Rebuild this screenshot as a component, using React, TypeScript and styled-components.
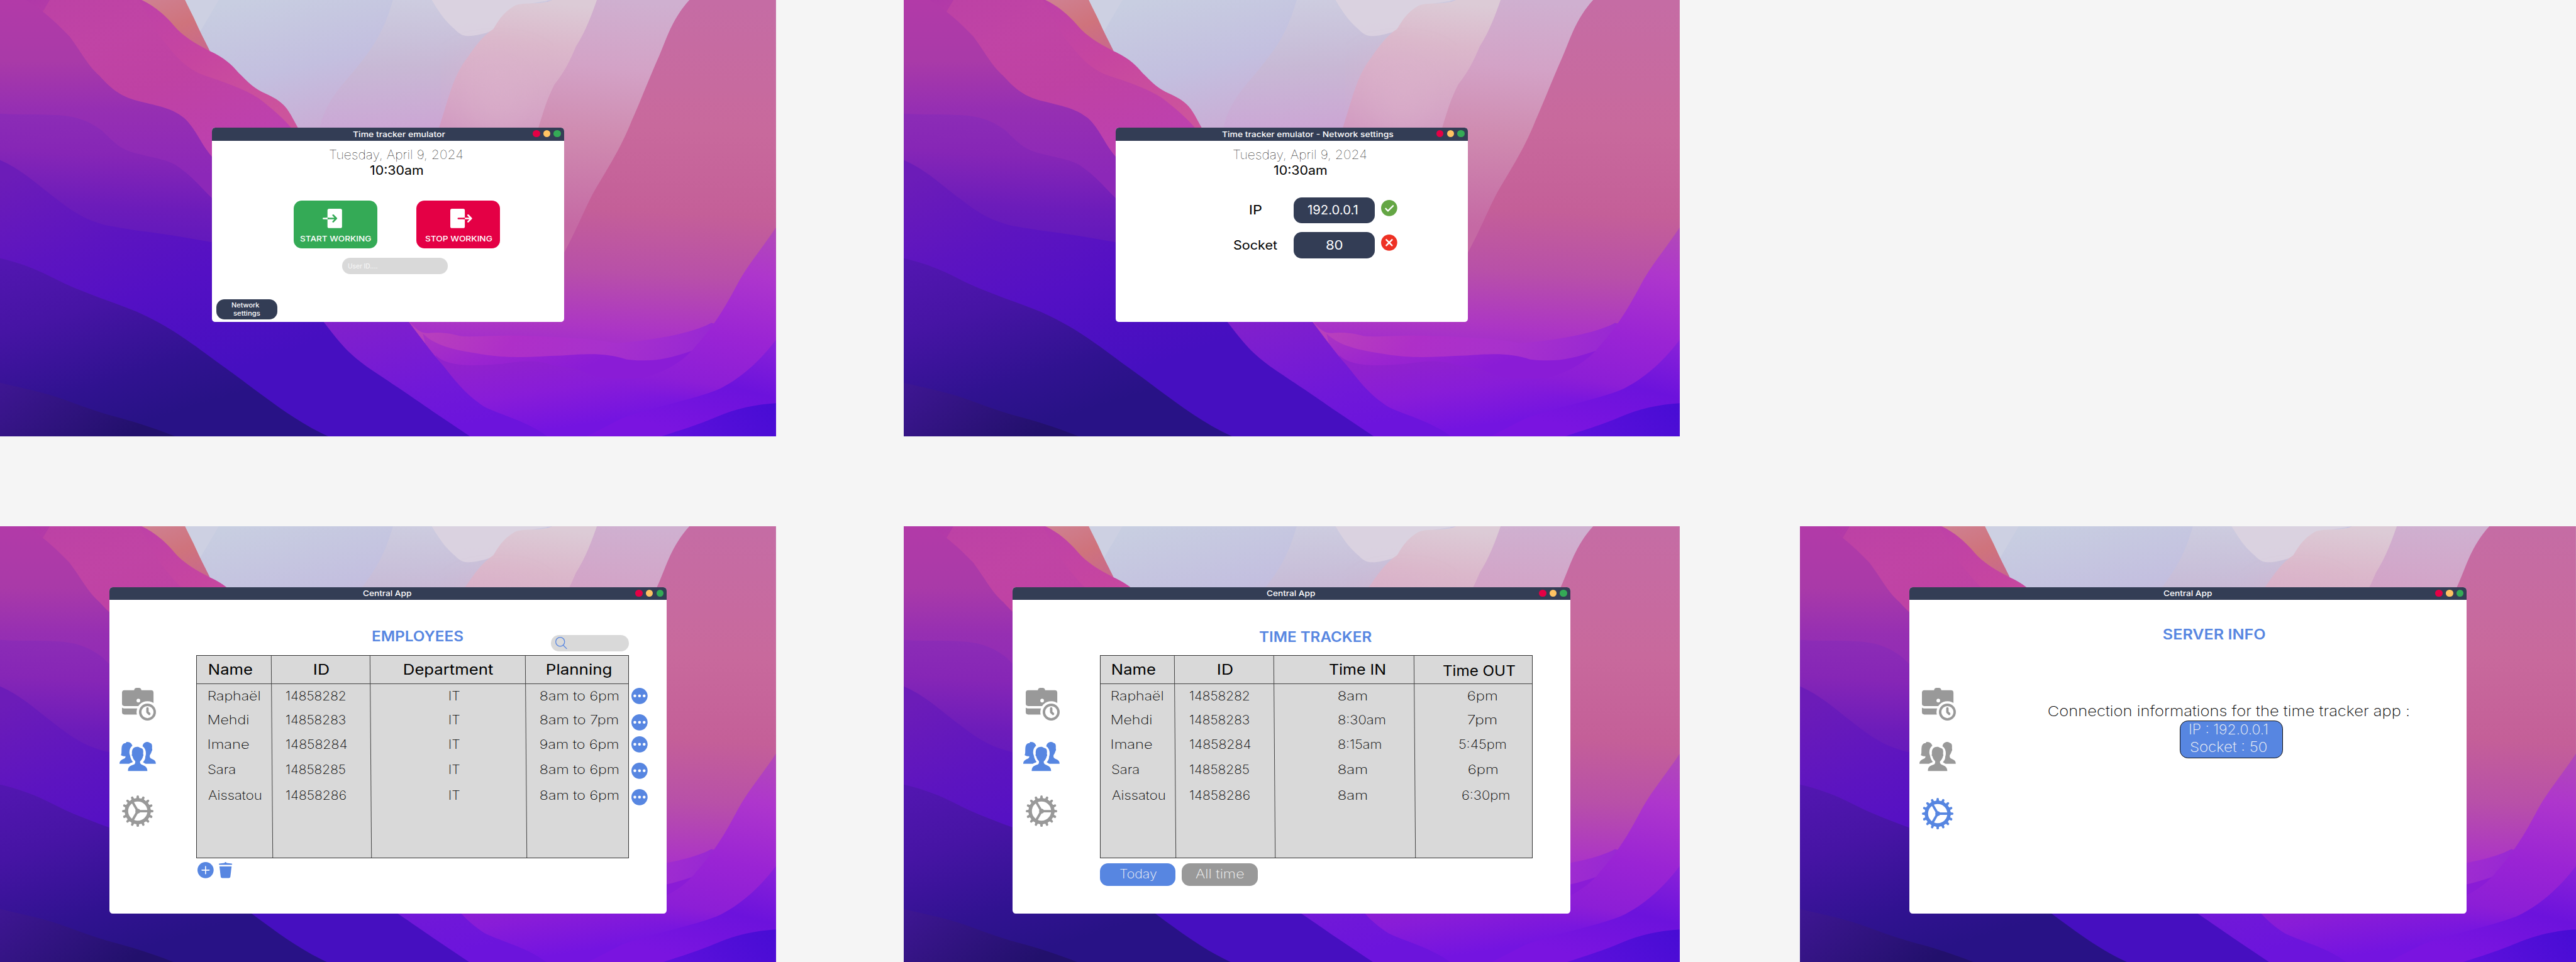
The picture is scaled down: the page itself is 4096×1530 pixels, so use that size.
import React, { useLayoutEffect, useRef, useState } from "react";
import styled, { createGlobalStyle, css } from "styled-components";

const SCALE = 4096 / 6374;
const u = (n: number) => `${+(n * SCALE).toFixed(3)}px`;

const FONT = `Inter, Lato, sans-serif`;
const CAP_FIX = 0.963;
const LINE = 1.219;

const color = {
  page: "#f5f5f5",
  navy: "#333d55",
  blue: "#5786e1",
  gray: "#999999",
  field: "#d9d9d9",
  green: "#34aa56",
  red: "#e40045",
  amber: "#ffc363",
  soft: "#f5f5f5",
};

const GlobalStyle = createGlobalStyle`
  body { margin: 0; background: ${color.page}; font-family: ${FONT}; }
  * { box-sizing: border-box; }
`;

/* ---------- text ---------- */

type InkProps = {
  children: string;
  w: number;
  size?: number;
  weight?: number;
  tone?: string;
  ml?: number;
  mt?: number;
};

const InkBox = styled.span<{ $w: number; $size: number; $weight: number; $tone: string; $ml: number; $mt: number }>`
  display: block;
  flex: none;
  width: ${(p) => u(p.$w)};
  height: ${(p) => u(p.$size * LINE)};
  line-height: ${(p) => u(p.$size * LINE)};
  margin: ${(p) => u(p.$mt)} 0 0 ${(p) => u(p.$ml)};
  font-size: ${(p) => u(p.$size * CAP_FIX)};
  font-weight: ${(p) => p.$weight};
  color: ${(p) => p.$tone};
  white-space: pre;
`;

const InkGlyphs = styled.span`
  display: inline-block;
  transform-origin: 0 0;
`;

/* Stretches a line of text so that its ink spans exactly the given width. */
function Ink({ children, w, size = 32, weight = 400, tone = "#000", ml = 0, mt = 0 }: InkProps) {
  const ref = useRef<HTMLSpanElement>(null);
  const [transform, setTransform] = useState("none");
  useLayoutEffect(() => {
    const ctx = document.createElement("canvas").getContext("2d");
    if (!ctx || !ref.current) return;
    const cs = getComputedStyle(ref.current);
    ctx.font = `${cs.fontWeight} ${cs.fontSize} ${cs.fontFamily}`;
    const m = ctx.measureText(children);
    const k = (w * SCALE) / (m.actualBoundingBoxLeft + m.actualBoundingBoxRight);
    const a = m.fontBoundingBoxAscent;
    const d = m.fontBoundingBoxDescent;
    const line = size * LINE * SCALE;
    const dy = 0.968 * size * SCALE - ((line - a - d) / 2 + a);
    setTransform(`translateY(${dy.toFixed(2)}px) scaleX(${k.toFixed(4)}) translateX(${m.actualBoundingBoxLeft.toFixed(2)}px)`);
  }, [children, w, size, weight]);
  return (
    <InkBox $w={w} $size={size} $weight={weight} $tone={tone} $ml={ml} $mt={mt}>
      <InkGlyphs ref={ref} style={{ transform }}>{children}</InkGlyphs>
    </InkBox>
  );
}

/* ---------- canvas and boards ---------- */

const Canvas = styled.main`
  width: 4096px;
  height: 1530px;
  overflow: hidden;
  display: flex;
  flex-direction: column;
  gap: ${u(222)};
  background: ${color.page};
`;

const BoardRow = styled.div`
  display: flex;
  flex: none;
  height: ${u(1080)};
`;

const BoardFrame = styled.section<{ $gap: number; $top: number }>`
  position: relative;
  flex: none;
  width: ${u(1920)};
  height: ${u(1080)};
  margin-left: ${(p) => u(p.$gap)};
  padding-top: ${(p) => u(p.$top)};
  display: flex;
  justify-content: center;
  align-items: flex-start;
  overflow: hidden;
`;

const WallpaperSvg = styled.svg`
  position: absolute;
  inset: 0;
  width: 100%;
  height: 100%;
`;

function Grad({ id, x1 = 0, y1 = 0, x2 = 0, y2 = 0, stops }: { id: string; x1?: number; y1?: number; x2?: number; y2?: number; stops: [number, string][] }) {
  return (
    <linearGradient id={id} gradientUnits="userSpaceOnUse" x1={x1} y1={y1} x2={x2} y2={y2}>
      {stops.map(([o, c]) => <stop key={o} offset={o} stopColor={c} />)}
    </linearGradient>
  );
}

function Wallpaper({ id }: { id: string }) {
  const f = (n: string) => `url(#${id}${n})`;
  return (
    <WallpaperSvg viewBox="0 0 1560 1554" preserveAspectRatio="none" aria-hidden>
      <defs>
        <Grad id={id + "sky"} x1={480} y1={0} x2={780} y2={700} stops={[[0, "#c8cee1"], [0.35, "#c3bfdf"], [0.7, "#cba9d3"], [1, "#c890c8"]]} />
        <Grad id={id + "sky2"} x1={780} y1={0} x2={760} y2={470} stops={[[0, "#d2d0df"], [0.5, "#c9b8d0"], [1, "#cca4d6"]]} />
        <Grad id={id + "p1"} x1={1050} y1={0} x2={950} y2={600} stops={[[0, "#dccbd6"], [0.25, "#dbb8cb"], [0.75, "#d29cc2"], [1, "#cf8cc0"]]} />
        <Grad id={id + "p2"} x1={1250} y1={0} x2={1120} y2={800} stops={[[0, "#cfb0d0"], [0.3, "#d3a2c6"], [0.6, "#cf8bb0"], [1, "#c569a4"]]} />
        <Grad id={id + "p3"} x1={1400} y1={0} x2={1280} y2={1300} stops={[[0, "#c56ca4"], [0.35, "#c8699c"], [0.58, "#c45f98"], [0.75, "#b850a8"], [0.9, "#ac36c4"], [1, "#9c28d0"]]} />
        <Grad id={id + "r1"} x1={1540} y1={820} x2={1340} y2={1420} stops={[[0, "#b148b8"], [0.25, "#ae36cc"], [0.6, "#9a24d4"], [0.88, "#8c1ed6"], [1, "#861ad800"]]} />
        <Grad id={id + "r2"} x1={1560} y1={1210} x2={1400} y2={1553} stops={[[0, "#8a22d8"], [0.5, "#6c12dc"], [1, "#7a14e0"]]} />
        <Grad id={id + "r3"} x1={1350} y1={1553} x2={1560} y2={1450} stops={[[0, "#5c10dc"], [1, "#480cd4"]]} />
        <Grad id={id + "b1"} x1={850} y1={1180} x2={1400} y2={1400} stops={[[0, "#b840bc"], [0.3, "#ae2fc8"], [0.6, "#a831cc"], [1, "#9426d4"]]} />
        <Grad id={id + "b2"} x1={860} y1={1200} x2={1000} y2={1420} stops={[[0, "#a932c4"], [0.5, "#9a24d0"], [1, "#8a1cd6"]]} />
        <Grad id={id + "b3"} x1={950} y1={1290} x2={1020} y2={1553} stops={[[0, "#9022cc"], [0.5, "#881cd8"], [1, "#7414e0"]]} />
        <Grad id={id + "or"} x1={300} y1={0} x2={420} y2={180} stops={[[0, "#cf8090"], [0.5, "#cf737c"], [1, "#c8688c"]]} />
        <Grad id={id + "ma"} x1={60} y1={0} x2={560} y2={420} stops={[[0, "#b038a8"], [0.3, "#bf42a6"], [0.6, "#c645a0"], [1, "#cc549c"]]} />
        <Grad id={id + "mb"} x1={300} y1={100} x2={520} y2={480} stops={[[0, "#c044a4"], [0.4, "#bc40a4"], [1, "#b83ab4"]]} />
        <Grad id={id + "mc"} x1={120} y1={0} x2={120} y2={620} stops={[[0, "#b23aa8"], [0.35, "#a93aa8"], [0.62, "#962fb2"], [1, "#8c28b8"]]} />
        <Grad id={id + "md"} x1={120} y1={405} x2={80} y2={860} stops={[[0, "#8c2cb6"], [0.3, "#8626b6"], [0.7, "#6c1cba"], [1, "#6018bc"]]} />
        <Grad id={id + "me"} x1={60} y1={600} x2={500} y2={1300} stops={[[0, "#6c1cb8"], [0.35, "#5c14c0"], [0.6, "#5410c4"], [1, "#460fc0"]]} />
        <Grad id={id + "mf"} x1={30} y1={920} x2={330} y2={1480} stops={[[0, "#5216b0"], [0.35, "#4614a4"], [0.75, "#301290"], [1, "#281286"]]} />
        <Grad id={id + "mg"} x1={0} y1={1370} x2={260} y2={1553} stops={[[0, "#3e1692"], [1, "#22106c"]]} />
        <Grad id={id + "pv"} x1={560} y1={900} x2={850} y2={1553} stops={[[0, "#8a24c8"], [0.4, "#8020cc"], [0.8, "#7018d8"], [1, "#6c14dc"]]} />
        <filter id={id + "soft"} x="-30%" y="-30%" width="160%" height="160%"><feGaussianBlur stdDeviation="40" /></filter>
      </defs>
      <rect width="1560" height="1554" fill={f("sky")} />
      <path d="M790 0C775 90 760 150 715 245C680 320 650 370 640 480L1000 700L1100 0Z" fill={f("sky2")} opacity="0.6" />
      <path d="M440 0C420 60 410 90 400 120L372 0Z" fill="#cdd0e2" />
      <path d="M868 0C885 50 895 75 915 105C930 135 945 135 990 110L1040 20L1110 0Z" fill="#dcd3e0" opacity="0.9" />
      <path d="M1110 0C1085 20 1055 5 1035 20C1010 45 1000 80 992 103C972 125 955 165 940 205C915 260 905 330 895 385L880 470L700 900V1200H1560V0Z" fill={f("p1")} />
      <ellipse cx="1000" cy="330" rx="70" ry="150" fill="#dcb4cc" opacity="0.5" filter={f("soft")} />
      <path d="M1200 0C1190 50 1178 110 1158 165C1145 220 1135 255 1115 300C1100 350 1092 400 1080 470L1000 1200H1560V0Z" fill={f("p2")} />
      <path d="M1386 0C1350 70 1340 140 1325 200C1305 280 1290 350 1270 430C1250 520 1225 590 1205 650C1180 720 1165 800 1134 900L1100 1080L815 1080L700 1400L1560 1554V0Z" fill={f("p3")} />
      <path d="M815 1130C840 1180 845 1186 862 1186C890 1182 905 1188 925 1197C950 1202 1000 1192 1060 1196C1130 1200 1190 1205 1240 1222C1330 1210 1400 1180 1430 1150L1560 1200V1554H900Z" fill={f("b1")} />
      <path d="M850 1188C880 1240 930 1250 970 1262C1030 1280 1080 1268 1130 1266C1190 1258 1220 1258 1260 1280C1310 1290 1340 1280 1390 1250L1560 1300V1554H900Z" fill={f("b2")} />
      <path d="M876 1265C900 1310 960 1302 1010 1296C1050 1285 1080 1280 1110 1300C1140 1312 1150 1305 1175 1325C1210 1355 1260 1350 1300 1345L1560 1300V1554H900Z" fill={f("b3")} />
      <path d="M1560 810C1530 890 1500 950 1480 1020C1450 1120 1430 1170 1400 1230C1370 1300 1320 1340 1260 1360L1200 1554H1560Z" fill={f("r1")} />
      <path d="M1560 1210C1530 1280 1490 1350 1440 1390C1380 1430 1310 1450 1250 1490L1180 1554H1560Z" fill={f("r2")} />
      <path d="M1560 1436C1520 1440 1480 1455 1440 1485C1400 1515 1370 1530 1330 1554H1560Z" fill={f("r3")} />
      <path d="M285 0H372C380 30 388 55 396 88C404 120 412 145 422 182L380 160L330 80Z" fill={f("or")} />
      <path d="M0 0H285C310 22 330 50 350 92C368 130 395 158 422 182C450 205 465 228 480 260C500 295 512 318 535 334C565 358 575 378 585 410L599 455L640 700L400 900L0 600Z" fill={f("ma")} />
      <path d="M280 0C300 60 310 110 340 170C360 215 380 248 410 268C450 292 490 315 520 350C545 385 570 420 590 465L640 800L300 800L0 300L100 0Z" fill={f("mb")} opacity="0.75" />
      <path d="M0 0H52C90 40 118 90 140 130C165 190 175 230 200 270C225 320 245 345 275 358C320 378 345 385 370 420C395 460 405 520 430 565L500 900H0Z" fill={f("mc")} />
      <path d="M0 405C50 410 70 406 110 410C160 412 185 440 205 465C225 500 240 528 265 542C300 560 330 565 352 586C385 625 400 660 430 712L820 1145L900 1400L500 1300L0 900Z" fill={f("md")} />
      <path d="M426 705C560 860 740 960 820 1142C845 1200 865 1250 890 1300C915 1355 935 1405 975 1450C1010 1480 1060 1500 1100 1554H900L500 1200Z" fill={f("pv")} />
      <path d="M0 570C40 600 70 650 100 690C140 745 165 780 215 803C270 822 320 830 370 845L430 864C540 900 600 1020 650 1145C685 1225 700 1260 745 1315C800 1380 830 1415 870 1465L945 1554H0Z" fill={f("me")} />
      <path d="M0 920C60 945 90 975 130 1010C180 1050 225 1075 275 1110C330 1155 355 1185 395 1235C440 1295 470 1330 510 1385C560 1450 605 1510 660 1554H0Z" fill={f("mf")} />
      <path d="M0 1363C60 1388 95 1400 135 1427C170 1450 200 1470 245 1490C285 1510 315 1528 352 1554H0Z" fill={f("mg")} />
    </WallpaperSvg>
  );
}

/* ---------- application window ---------- */

const WindowFrame = styled.article<{ $w: number; $h: number }>`
  position: relative;
  width: ${(p) => u(p.$w)};
  height: ${(p) => u(p.$h)};
  border-radius: ${u(8)};
  background: #fff;
  overflow: hidden;
  display: flex;
  flex-direction: column;
`;

const TitleBar = styled.header`
  flex: none;
  height: ${u(32)};
  background: ${color.navy};
  display: flex;
  align-items: flex-start;
`;

const Lights = styled.div`
  margin: ${u(6)} ${u(8)} 0 auto;
  display: flex;
  gap: ${u(8)};
`;

const Light = styled.i<{ $c: string }>`
  width: ${u(18)};
  height: ${u(18)};
  border-radius: 50%;
  background: ${(p) => p.$c};
`;

type Title = { text: string; w: number; ml: number; mt: number };

function AppWindow({ w, h, title, children }: { w: number; h: number; title: Title; children: React.ReactNode }) {
  return (
    <WindowFrame $w={w} $h={h}>
      <TitleBar>
        <Ink size={20} weight={550} tone="#fff" w={title.w} ml={title.ml} mt={title.mt}>{title.text}</Ink>
        <Lights>
          <Light $c={color.red} />
          <Light $c={color.amber} />
          <Light $c={color.green} />
        </Lights>
      </TitleBar>
      {children}
    </WindowFrame>
  );
}

/* ---------- emulator screens ---------- */

const Clock = styled.div`
  width: ${u(330.5)};
  margin: ${u(16)} 0 0 ${u(291)};
  display: flex;
  flex-direction: column;
  align-items: center;
`;

const ClockFace = () => (
  <Clock>
    <Ink w={330} weight={100}>Tuesday, April 9, 2024</Ink>
    <Ink w={131} weight={400}>10:30am</Ink>
  </Clock>
);

const Actions = styled.div`
  display: flex;
  gap: ${u(96)};
  margin: ${u(55)} 0 0 ${u(203)};
`;

const ActionButton = styled.div<{ $c: string }>`
  width: ${u(207)};
  height: ${u(117)};
  border-radius: ${u(20)};
  background: ${(p) => p.$c};
  display: flex;
  flex-direction: column;
`;

const Icon = styled.svg<{ $w: number; $h: number; $ml?: number; $mt?: number }>`
  display: block;
  flex: none;
  width: ${(p) => u(p.$w)};
  height: ${(p) => u(p.$h)};
  margin: ${(p) => u(p.$mt ?? 0)} 0 0 ${(p) => u(p.$ml ?? 0)};
  overflow: visible;
`;

const EnterIcon = () => (
  <Icon viewBox="0 0 48 48" $w={48} $h={48} $ml={71} $mt={20} fill="none" strokeWidth={4}>
    <rect x="12" y="0" width="36" height="48" rx="4" fill="#fff" />
    <path d="M12 24H2" stroke="#fff" strokeLinecap="round" />
    <path d="M12 22H15V26H12Z" fill={color.green} />
    <path d="M14 24H34M26 16L34 24L26 32" stroke={color.green} strokeLinecap="round" strokeLinejoin="round" />
    <path d="M9 22H12V26H9Z" fill="#fff" />
  </Icon>
);

const LeaveIcon = () => (
  <Icon viewBox="0 0 54 48" $w={54} $h={48} $ml={84} $mt={20} fill="none" strokeWidth={4}>
    <rect x="0" y="0" width="36" height="48" rx="4" fill="#fff" />
    <path d="M20 24H34" stroke={color.red} strokeLinecap="round" />
    <path d="M36 24H50" stroke="#fff" />
    <path d="M33 22H36V26H33Z" fill={color.red} />
    <path d="M44 16L52 24L44 32" stroke="#fff" strokeLinecap="round" strokeLinejoin="round" />
  </Icon>
);

const IdField = styled.div`
  width: ${u(261)};
  height: ${u(41)};
  margin: ${u(24)} 0 0 ${u(323)};
  border-radius: ${u(20)};
  background: ${color.field};
  display: flex;
`;

const SettingsButton = styled.div`
  width: ${u(150)};
  height: ${u(49)};
  margin: ${u(62)} 0 0 ${u(12)};
  border-radius: ${u(20)};
  background: ${color.navy};
  display: flex;
  flex-direction: column;
`;

const FormRow = styled.div<{ $mt: number }>`
  display: flex;
  height: ${u(65)};
  margin-top: ${(p) => u(p.$mt)};
`;

const FormLabel = styled.div`
  width: ${u(441)};
  display: flex;
`;

const FormValue = styled.div`
  width: ${u(201)};
  border-radius: ${u(20)};
  background: ${color.navy};
  display: flex;
`;

/* ---------- central app ---------- */

const CentralBody = styled.div`
  display: flex;
  flex: 1;
`;

const Sidebar = styled.nav`
  flex: none;
  width: ${u(215)};
  padding-top: ${u(217)};
`;

const BriefcaseIcon = ({ c }: { c: string }) => (
  <Icon viewBox="0 0 84 81" $w={84} $h={81} $ml={32} fill={c}>
    <path d="M6 6H30C30 2 33 0 36 0H42C45 0 48 2 48 6H72Q78 6 78 12V45H6Q0 45 0 39V12Q0 6 6 6Z" />
    <path d="M0 49Q3 51 6 51H50V66H6Q0 66 0 60Z" />
    <circle cx="40.5" cy="31.5" r="4.5" fill="#fff" />
    <circle cx="63" cy="60" r="27" fill="#fff" />
    <circle cx="63" cy="60" r="18" fill="none" stroke={c} strokeWidth="6" />
    <path d="M63 51V60L67.5 64.5" fill="none" stroke={c} strokeWidth="6" strokeLinecap="round" strokeLinejoin="round" />
  </Icon>
);

const PeopleIcon = ({ c }: { c: string }) => (
  <Icon viewBox="0 0 90 72" $w={90} $h={72} $ml={26} $mt={53.7} fill={c}>
    <path d="M0 54C0 48 4 45 9 42.500C13 41 15 40 15 35.500C10 35.500 6 34.500 3.500 32.500C6 29 4.500 20 5.500 13C6.500 6 10 3 15 3C17 0 19 0 21 .3C27 .3 30 4 32 9.500C27 13 24.500 19 24.500 26C24.500 30 26 31 26.500 35C27.500 41 30 45 33 49.500C30 52 27 52 24 54Z" />
    <path d="M57 11C58 4 63 0 69 0C73 0 74 2.500 77 3C81 5 81 10 80.500 16C82 19 80.500 22 79 25C78 29 76 31 75 33C74 38 76 40 81 42.500C87 45 90 48 90 54H65C62 53 60 51 58 50C62 46 64 42 64 36C65.500 32 65.500 28 65 24C64 18 61 13 57 11Z" />
    <path d="M21 72C21 65 23 61 30 58C36 55.500 39 55 39 50V48C35 44 33 40 32 35.500C30 34 30 32 31 30C30 18 34 12 44 12C49 12 50 15 53 15C59 16 59.500 22 58.500 30C60 32 59 34 58 36C57 41 54 45 51 48C50 54 53 55.500 59 58C66 61 69 65 69 72Z" />
  </Icon>
);

const TEETH = Array.from({ length: 16 }, (_, i) => i * 22.5);

const GearIcon = ({ c, mt = 60 }: { c: string; mt?: number }) => (
  <Icon viewBox="0 0 78 78" $w={78} $h={78} $ml={32} $mt={mt} fill="none" stroke={c}>
    <circle cx="39" cy="39" r="28" strokeWidth="8.500" />
    {TEETH.map((a) => (
      <g key={a} transform={`rotate(${a} 39 39)`}>
        <path d="M39 8V3" strokeWidth="6" strokeLinecap="round" />
        <path d="M33.500 8.500Q36.500 7 36.500 4H41.500Q41.500 7 44.500 8.500Z" fill={c} stroke="none" />
      </g>
    ))}
    {[0, 120, 240].map((a) => (
      <path key={a} d="M39 39H65" strokeWidth="6" transform={`rotate(${a} 39 39)`} />
    ))}
    <circle cx="39" cy="39" r="6" fill={c} stroke="none" />
  </Icon>
);

const Main = styled.div`
  flex: 1;
  display: flex;
  flex-direction: column;
`;

const MainHead = styled.div`
  flex: none;
  height: ${u(136.8)};
  display: flex;
`;

const SearchBox = styled.div`
  width: ${u(192)};
  height: ${u(41)};
  margin: ${u(86)} 0 0 ${u(217)};
  border-radius: ${u(20)};
  background: ${color.field};
`;

const TableRow = styled.div`
  display: flex;
  height: ${u(502)};
`;

const Table = styled.div`
  display: flex;
  width: ${u(1071)};
  height: 100%;
  background: ${color.field};
  border: 1px solid #333;
`;

const Column = styled.div<{ $w: number; $last?: boolean }>`
  position: relative;
  flex: none;
  width: ${(p) => u(p.$w)};
  ${(p) => p.$last && css`flex: 1;`}
  &::after {
    content: "";
    display: ${(p) => (p.$last ? "none" : "block")};
    position: absolute;
    top: 0;
    bottom: 0;
    right: 0;
    width: 1px;
    background: #444;
    transform: skewX(0.43deg);
  }
`;

const HeadCell = styled.div`
  height: ${u(69)};
  border-bottom: 1px solid #444;
  padding-top: ${u(11.6)};
  display: flex;
`;

const BodyCell = styled.div<{ $h: number }>`
  height: ${(p) => u(p.$h)};
  padding-top: ${u(11.5)};
  display: flex;
`;

const ROW_HEIGHTS = [59.4, 60, 63.3, 63, 63];

type Cell = { t: string; w: number; x: number };
type ColumnData = { width: number; head: Cell & { dy?: number }; cells: Cell[] };

const col = (width: number, head: [string, number, number, number?], cells: [string, number, number][]): ColumnData => ({
  width,
  head: { t: head[0], w: head[1], x: head[2], dy: head[3] },
  cells: cells.map(([t, w, x]) => ({ t, w, x })),
});

function DataTable({ columns }: { columns: ColumnData[] }) {
  return (
    <Table>
      {columns.map((c, i) => (
        <Column key={i} $w={c.width} $last={i === columns.length - 1}>
          <HeadCell>
            <Ink size={36} weight={370} w={c.head.w} ml={c.head.x} mt={c.head.dy}>{c.head.t}</Ink>
          </HeadCell>
          {c.cells.map((r, j) => (
            <BodyCell key={j} $h={ROW_HEIGHTS[j]}>
              <Ink weight={220} w={r.w} ml={r.x}>{r.t}</Ink>
            </BodyCell>
          ))}
        </Column>
      ))}
    </Table>
  );
}

const names = (x: number) => col(x, ["Name", 107, 29.5], [["Raphaël", 126, 29.5], ["Mehdi", 97.5, 29.5], ["Imane", 100, 29.5], ["Sara", 66, 28], ["Aissatou", 130.5, 28]]);
const ids = (w: number, dx: number) => col(w, ["ID", 37, 101.5 + dx], [["14858282", 147, 33 + dx], ["14858283", 147, 33 + dx], ["14858284", 150, 33 + dx], ["14858285", 147, 33 + dx], ["14858286", 148.5, 33 + dx]]);

const employees: ColumnData[] = [
  names(187.5),
  ids(244, 0.5),
  col(384, ["Department", 221, 81.5], [0, 1, 2, 3, 4].map(() => ["IT", 25.5, 194] as [string, number, number])),
  col(254, ["Planning", 159.5, 50.5], [["8am to 6pm", 194, 34], ["8am to 7pm", 192.5, 34], ["9am to 6pm", 193, 34], ["8am to 6pm", 194, 34], ["8am to 6pm", 194, 34]]),
];

const timesheet: ColumnData[] = [
  names(186),
  ids(245.5, 2),
  col(348, ["Time IN", 137, 136], [["8am", 71, 157], ["8:30am", 116, 157], ["8:15am", 106, 157], ["8am", 71, 157], ["8am", 71, 157]]),
  col(290, ["Time OUT", 178, 70, 3], [["6pm", 72, 130], ["7pm", 71, 130.5], ["5:45pm", 116, 109], ["6pm", 72, 131], ["6:30pm", 117, 116.5]]),
];

const MenuColumn = styled.div`
  margin: ${u(81)} 0 0 ${u(6)};
`;

const MoreIcon = ({ mt }: { mt: number }) => (
  <Icon viewBox="0 0 40 40" $w={40} $h={40} $mt={mt} fill="#fff">
    <circle cx="20" cy="20" r="20" fill={color.blue} />
    <circle cx="8.5" cy="20" r="3.5" />
    <circle cx="20" cy="20" r="3.5" />
    <circle cx="31.5" cy="20" r="3.5" />
  </Icon>
);

const Footer = styled.div<{ $gap: number; $mt: number; $ml?: number }>`
  display: flex;
  gap: ${(p) => u(p.$gap)};
  margin: ${(p) => u(p.$mt)} 0 0 ${(p) => u(p.$ml ?? 0)};
`;

const RangeButton = styled.div<{ $c: string }>`
  width: ${u(188)};
  height: ${u(56)};
  border-radius: ${u(20)};
  background: ${(p) => p.$c};
  display: flex;
`;

const ServerCard = styled.div`
  width: ${u(256)};
  height: ${u(93.5)};
  margin: ${u(1.5)} 0 0 ${u(454.5)};
  border-radius: ${u(20)};
  border: 1px solid #111;
  background: ${color.blue};
  display: flex;
  flex-direction: column;
`;

function CentralSidebar({ active }: { active: "people" | "gear" }) {
  return (
    <Sidebar>
      <BriefcaseIcon c={color.gray} />
      <PeopleIcon c={active === "people" ? color.blue : color.gray} />
      <GearIcon c={active === "gear" ? color.blue : color.gray} mt={active === "gear" ? 66.4 : 60} />
    </Sidebar>
  );
}

const centralTitle: Title = { text: "Central App", w: 121, ml: 628.5, mt: 3.2 };

export default function App() {
  return (
    <Canvas>
      <GlobalStyle />
      <BoardRow>
        <BoardFrame $gap={0} $top={316}>
          <Wallpaper id="a" />
          <AppWindow w={872} h={480} title={{ text: "Time tracker emulator", w: 229, ml: 349, mt: 4 }}>
            <ClockFace />
            <Actions>
              <ActionButton $c={color.green}>
                <EnterIcon />
                <Ink size={20} weight={480} tone="#fff" w={176} ml={15.3} mt={13.3}>START WORKING</Ink>
              </ActionButton>
              <ActionButton $c={color.red}>
                <LeaveIcon />
                <Ink size={20} weight={480} tone="#fff" w={166} ml={21.3} mt={13.3}>STOP WORKING</Ink>
              </ActionButton>
            </Actions>
            <IdField>
              <Ink size={16} weight={500} tone={color.soft} w={74} ml={14} mt={11.3}>User ID....</Ink>
            </IdField>
            <SettingsButton>
              <Ink size={16} weight={500} tone="#fff" w={70} ml={37.3} mt={4.5}>Network</Ink>
              <Ink size={16} weight={500} tone="#fff" w={66} ml={41.4}>settings</Ink>
            </SettingsButton>
          </AppWindow>
        </BoardFrame>
        <BoardFrame $gap={316} $top={316}>
          <Wallpaper id="b" />
          <AppWindow w={872} h={480} title={{ text: "Time tracker emulator - Network settings", w: 425, ml: 263.4, mt: 4 }}>
            <ClockFace />
            <FormRow $mt={46}>
              <FormLabel><Ink w={30} weight={400} ml={332.6} mt={13.2}>IP</Ink></FormLabel>
              <FormValue><Ink w={124} weight={400} tone="#fff" ml={35} mt={13.2}>192.0.0.1</Ink></FormValue>
              <Icon viewBox="0 0 40 40" $w={40} $h={40} $ml={15} $mt={7} fill="none" stroke="#fff" strokeWidth={3.6} strokeLinecap="round" strokeLinejoin="round">
                <circle cx="20" cy="20" r="20" fill="#64a644" stroke="none" />
                <path d="M11.5 21.5L17 27.3L29.7 14.5" />
              </Icon>
            </FormRow>
            <FormRow $mt={22}>
              <FormLabel><Ink w={108.5} weight={400} ml={292.7} mt={13.5}>Socket</Ink></FormLabel>
              <FormValue><Ink w={40.5} weight={400} tone="#fff" ml={80.5} mt={13.5}>80</Ink></FormValue>
              <Icon viewBox="0 0 40 40" $w={40} $h={40} $ml={15} $mt={6} fill="none" stroke="#fff" strokeWidth={3.8} strokeLinecap="round">
                <circle cx="20" cy="20" r="20" fill="#ee3124" stroke="none" />
                <path d="M13 13L27 27M27 13L13 27" />
              </Icon>
            </FormRow>
          </AppWindow>
        </BoardFrame>
      </BoardRow>
      <BoardRow>
        <BoardFrame $gap={0} $top={151}>
          <Wallpaper id="c" />
          <AppWindow w={1380} h={808} title={centralTitle}>
            <CentralBody>
              <CentralSidebar active="people" />
              <Main>
                <MainHead>
                  <Ink size={36} weight={600} tone={color.blue} w={225} ml={437} mt={68.5}>EMPLOYEES</Ink>
                  <SearchBox>
                    <Icon viewBox="0 0 30 30" $w={30} $h={30} $ml={10.5} $mt={5} fill="none" stroke={color.blue} strokeWidth={2} strokeLinecap="round">
                      <circle cx="12" cy="12" r="11" />
                      <path d="M20 21L28 29" />
                    </Icon>
                  </SearchBox>
                </MainHead>
                <TableRow>
                  <DataTable columns={employees} />
                  <MenuColumn>
                    {[0, 25, 15, 25, 26].map((mt, i) => <MoreIcon key={i} mt={mt} />)}
                  </MenuColumn>
                </TableRow>
                <Footer $gap={13.5} $mt={9.5} $ml={3.6}>
                  <Icon viewBox="0 0 40 40" $w={40} $h={40} $mt={1} fill="none" stroke="#fff" strokeWidth={2.5} strokeLinecap="round">
                    <circle cx="20" cy="20" r="20" fill={color.blue} stroke="none" />
                    <path d="M11 20H29M20 11V29" />
                  </Icon>
                  <Icon viewBox="0 0 33 40" $w={33} $h={40} fill={color.blue}>
                    <path d="M1 4L14 2.5Q14.5 0 16.5 0Q18.5 0 19 2.5L32 4Q33 4.5 33 6Q32.5 7.2 31 7H2Q.5 7.2 0 6Q0 4.5 1 4Z" />
                    <path d="M1.5 11H31.5L28.5 36Q28 39.5 24.5 39.5H8.5Q5 39.5 4.5 36Z" />
                  </Icon>
                </Footer>
              </Main>
            </CentralBody>
          </AppWindow>
        </BoardFrame>
        <BoardFrame $gap={316} $top={151}>
          <Wallpaper id="d" />
          <AppWindow w={1380} h={808} title={centralTitle}>
            <CentralBody>
              <CentralSidebar active="people" />
              <Main>
                <MainHead>
                  <Ink size={36} weight={600} tone={color.blue} w={278} ml={395} mt={69.5}>TIME TRACKER</Ink>
                </MainHead>
                <TableRow>
                  <DataTable columns={timesheet} />
                </TableRow>
                <Footer $gap={15} $mt={13.3}>
                  <RangeButton $c={color.blue}>
                    <Ink weight={200} tone={color.soft} w={91.5} ml={51} mt={8}>Today</Ink>
                  </RangeButton>
                  <RangeButton $c={color.gray}>
                    <Ink weight={200} tone={color.soft} w={120} ml={34.5} mt={8}>All time</Ink>
                  </RangeButton>
                </Footer>
              </Main>
            </CentralBody>
          </AppWindow>
        </BoardFrame>
        <BoardFrame $gap={298} $top={151}>
          <Wallpaper id="e" />
          <AppWindow w={1380} h={808} title={centralTitle}>
            <CentralBody>
              <CentralSidebar active="gear" />
              <Main>
                <Ink size={36} weight={600} tone={color.blue} w={251} ml={414.8} mt={62.7}>SERVER INFO</Ink>
                <Ink size={36} weight={240} w={891} ml={130} mt={146.5}>Connection informations for the time tracker app :</Ink>
                <ServerCard>
                  <Ink size={36} weight={200} tone={color.soft} w={192} ml={23} mt={-2}>IP : 192.0.0.1</Ink>
                  <Ink size={36} weight={200} tone={color.soft} w={188} ml={25}>Socket : 50</Ink>
                </ServerCard>
              </Main>
            </CentralBody>
          </AppWindow>
        </BoardFrame>
      </BoardRow>
    </Canvas>
  );
}
